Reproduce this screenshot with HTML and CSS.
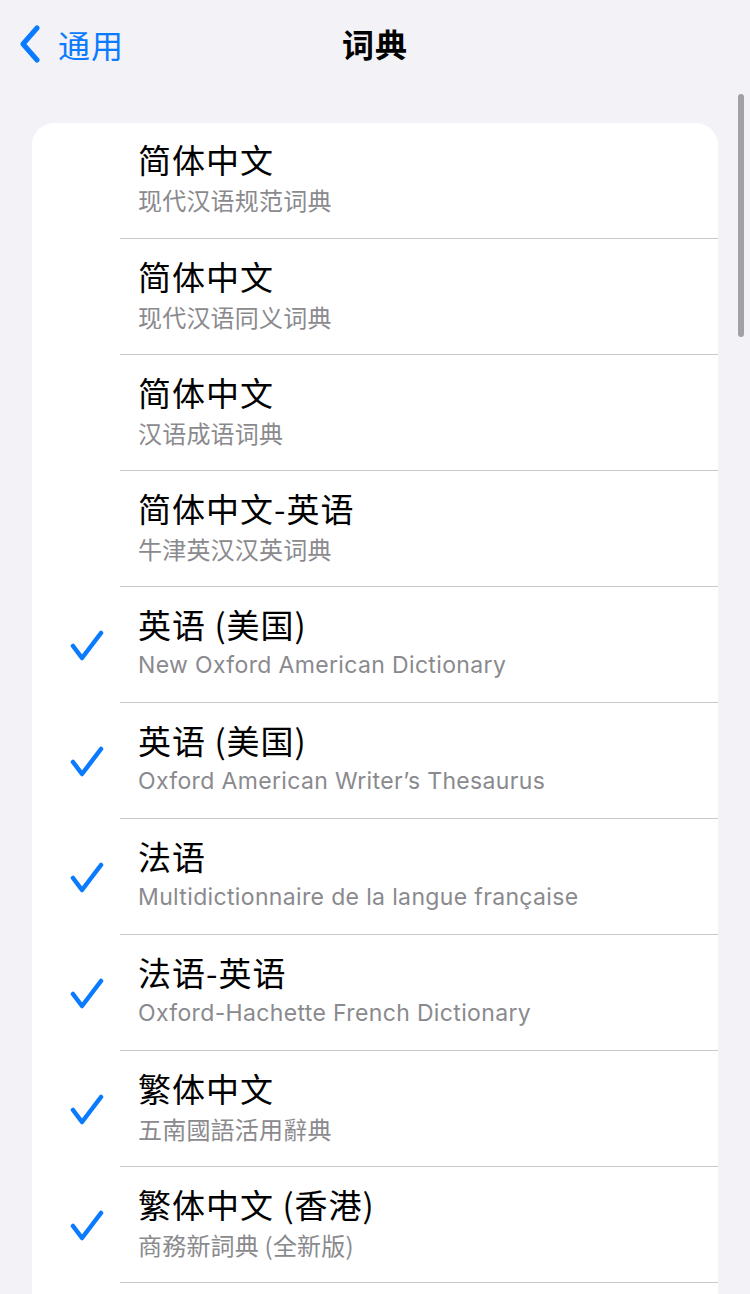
FILE: index.html
```html
<!DOCTYPE html>
<html lang="zh-CN">
<head>
    <meta charset="UTF-8">
    <meta name="viewport" content="width=device-width, initial-scale=1.0">
    <title>词典</title>
    <link rel="stylesheet" href="styles.css">
</head>
<body>
    <div class="nav">
        <a class="back">
            <svg class="chevron" viewBox="0 0 22 38" width="22" height="38">
                <path d="M18 3 L4 19 L18 35" fill="none" stroke="#0a7aff" stroke-width="5" stroke-linecap="round" stroke-linejoin="round"/>
            </svg>
            <span>通用</span>
        </a>
        <h1 class="title">词典</h1>
    </div>

    <div class="scroller">
        <div class="list">
            <div class="row">
                <div class="check"></div>
                <div class="content">
                    <div class="name">简体中文</div>
                    <div class="sub">现代汉语规范词典</div>
                </div>
            </div>
            <div class="row">
                <div class="check"></div>
                <div class="content">
                    <div class="name">简体中文</div>
                    <div class="sub">现代汉语同义词典</div>
                </div>
            </div>
            <div class="row">
                <div class="check"></div>
                <div class="content">
                    <div class="name">简体中文</div>
                    <div class="sub">汉语成语词典</div>
                </div>
            </div>
            <div class="row">
                <div class="check"></div>
                <div class="content">
                    <div class="name">简体中文-英语</div>
                    <div class="sub">牛津英汉汉英词典</div>
                </div>
            </div>
            <div class="row">
                <div class="check on"><svg viewBox="0 0 34 32" width="34" height="32"><path d="M3 16 L12 28 L31 3" /></svg></div>
                <div class="content">
                    <div class="name">英语 (美国)</div>
                    <div class="sub latin">New Oxford American Dictionary</div>
                </div>
            </div>
            <div class="row">
                <div class="check on"><svg viewBox="0 0 34 32" width="34" height="32"><path d="M3 16 L12 28 L31 3" /></svg></div>
                <div class="content">
                    <div class="name">英语 (美国)</div>
                    <div class="sub latin">Oxford American Writer’s Thesaurus</div>
                </div>
            </div>
            <div class="row">
                <div class="check on"><svg viewBox="0 0 34 32" width="34" height="32"><path d="M3 16 L12 28 L31 3" /></svg></div>
                <div class="content">
                    <div class="name">法语</div>
                    <div class="sub latin">Multidictionnaire de la langue française</div>
                </div>
            </div>
            <div class="row">
                <div class="check on"><svg viewBox="0 0 34 32" width="34" height="32"><path d="M3 16 L12 28 L31 3" /></svg></div>
                <div class="content">
                    <div class="name">法语-英语</div>
                    <div class="sub latin">Oxford-Hachette French Dictionary</div>
                </div>
            </div>
            <div class="row">
                <div class="check on"><svg viewBox="0 0 34 32" width="34" height="32"><path d="M3 16 L12 28 L31 3" /></svg></div>
                <div class="content">
                    <div class="name">繁体中文</div>
                    <div class="sub">五南國語活用辭典</div>
                </div>
            </div>
            <div class="row">
                <div class="check on"><svg viewBox="0 0 34 32" width="34" height="32"><path d="M3 16 L12 28 L31 3" /></svg></div>
                <div class="content">
                    <div class="name">繁体中文 (香港)</div>
                    <div class="sub">商務新詞典 (全新版)</div>
                </div>
            </div>
            <div class="row">
                <div class="check"></div>
                <div class="content">
                    <div class="name">&nbsp;</div>
                    <div class="sub">&nbsp;</div>
                </div>
            </div>
        </div>
        <div class="scrollbar"></div>
    </div>
</body>
</html>
```

FILE: styles.css
```css
body {
    margin: 0;
    width: 750px;
    height: 1294px;
    overflow: hidden;
    background-color: #f2f2f7;
    font-family: "Noto Sans CJK SC", "Noto Sans", sans-serif;
    color: #000;
}

.nav {
    position: relative;
    height: 90px;
    display: flex;
    align-items: center;
}

.back {
    display: flex;
    align-items: center;
    gap: 17px;
    padding-left: 19px;
    padding-bottom: 2px;
    color: #0a7aff;
    font-size: 32px;
    line-height: 40px;
    letter-spacing: 1px;
}

.chevron {
    display: block;
}

.title {
    position: absolute;
    left: 0;
    right: 0;
    top: 22px;
    margin: 0;
    text-align: center;
    font-size: 32px;
    font-weight: 700;
    line-height: 42px;
    letter-spacing: 1px;
}

.scroller {
    position: relative;
    padding: 33px 32px 0 32px;
}

.list {
    background: #fff;
    border-radius: 22px 22px 0 0;
}

.row {
    display: flex;
    height: 116px;
}

.check {
    width: 88px;
    flex-shrink: 0;
    display: flex;
    align-items: center;
    justify-content: flex-end;
    box-sizing: border-box;
    padding: 2px 16px 0 0;
}

.check svg path {
    fill: none;
    stroke: #0a7aff;
    stroke-width: 4.5;
    stroke-linecap: round;
    stroke-linejoin: round;
}

.content {
    flex: 1;
    padding: 16px 0 0 18px;
    border-bottom: 1px solid #c8c8cc;
}

.row:first-child .content {
    padding-top: 15px;
}

.name {
    font-size: 33px;
    line-height: 42px;
    letter-spacing: 1px;
    white-space: pre;
}

.sub {
    margin-top: 5px;
    font-size: 24px;
    line-height: 30px;
    color: #8a8a8e;
    letter-spacing: 0.2px;
    white-space: pre;
}

.sub.latin {
    font-family: Inter, "Noto Sans", sans-serif;
    font-size: 23px;
    letter-spacing: 0.35px;
}

.scrollbar {
    position: absolute;
    top: 4px;
    right: 6px;
    width: 6px;
    height: 243px;
    border-radius: 3px;
    background: #a1a1a3;
}
```
